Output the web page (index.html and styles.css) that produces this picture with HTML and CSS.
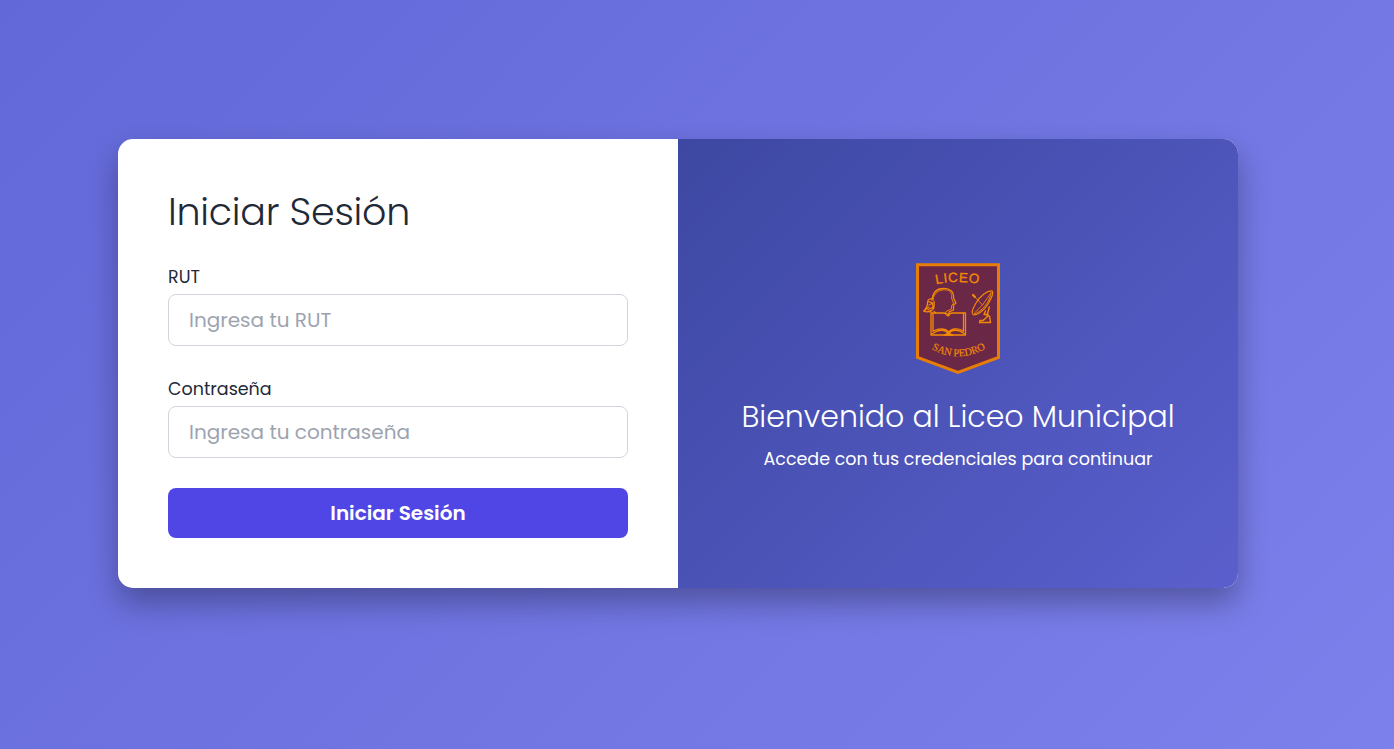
FILE: index.html
```html
<!DOCTYPE html>
<html lang="es">
<head>
<meta charset="utf-8">
<title>Iniciar Sesión</title>
<link rel="stylesheet" href="styles.css">
</head>
<body>
<main class="card">
  <form class="login">
    <h1 class="title">Iniciar Sesión</h1>
    <div class="field">
      <label class="label" for="rut">RUT</label>
      <input class="input" id="rut" type="text" placeholder="Ingresa tu RUT">
    </div>
    <div class="field">
      <label class="label" for="pass">Contraseña</label>
      <input class="input" id="pass" type="password" placeholder="Ingresa tu contraseña">
    </div>
    <button class="submit" type="button">Iniciar Sesión</button>
  </form>
  <section class="welcome">
    <svg class="crest" viewBox="0 0 84 112" width="84" height="112" fill="none" stroke="#f48a04" stroke-linecap="round" stroke-linejoin="round">
      <path d="M1.500 1.800H82.500V94.500L42 109.500L1.500 94.500Z" fill="#6b2846" stroke="#e87d06" stroke-width="3" stroke-linejoin="miter"/>
      <path id="arc-top" d="M20 21.200Q42 16.800 64 21.200" stroke="none"/>
      <path id="arc-bottom" d="M15.500 86Q42 101 70 85.500" stroke="none"/>
      <text class="crest-top"><textPath href="#arc-top" textLength="43" lengthAdjust="spacing">LICEO</textPath></text>
      <text class="crest-bottom"><textPath href="#arc-bottom" textLength="57" lengthAdjust="spacing">SAN PEDRO</textPath></text>
      <path d="M16 37C17 29 21 25.500 27 25.500C34 25 38 29 37.500 35L40 40L37.500 42V47L33 49V52" stroke-width="1.300"/>
      <path d="M17 37C18 29 24 26 31 27C35.500 28 36 32 35.500 35L37.500 40L35.500 43V46L30 48.500Q28 51 31 53Q33 53 34 51" stroke-width=".9"/>
      <path d="M18 48.500L20 50M17 36Q12 35 11.500 39Q12 44 7.500 48Q12 50 16 47Q19 44 18 38M12 39Q17 38 17 44L12 47M13 42L17 40M8 48L13 44M14 49L18 45" stroke-width="1.200"/>
      <path d="M15 50V72H49.500V50M17 51V68M47.500 51V68M15 50H27Q32 50 32.500 53Q33 50 37 50H49.500" stroke-width="1.300"/>
      <path d="M17 68C24 65 29 65 32.500 69C36 65 42 65 47.500 68M16 71C23 66.500 29 66.500 32.500 71C36 66.500 42 66.500 49 71M18 69.500C25 66 29 66 32.500 70C36 66 41 66 47 69.500" stroke-width="1.200"/>
      <path d="M28 72Q32.500 68.500 37 72Z" fill="#f48a04" stroke-width="1"/>
      <path d="M76.300 28C71 27.500 64 33 60 40C57 45 55 50 57 51.500C60 53 68 48 72 41C75 36 77.500 30 76.300 28Z" stroke-width="1.200"/>
      <path d="M75 29.500C74.500 38 66 49 58 51M58 33L66.500 42L75 30M66.500 42L59 49.500" stroke-width=".9"/>
      <path d="M57 32L59 34" stroke-width="2.200"/>
      <path d="M73.300 44L71 53H73.500L74.500 59.500H63.500L64 57.500H67L71 54M69.500 48L68 51.500H72" stroke-width="1.400"/>
    </svg>
    <h2 class="greeting">Bienvenido al Liceo Municipal</h2>
    <p class="hint">Accede con tus credenciales para continuar</p>
  </section>
</main>
</body>
</html>
```
FILE: styles.css
```css
* { box-sizing: border-box; }

body {
  margin: 0;
  min-height: 749px;
  padding: 139px 118px;
  background: linear-gradient(135deg, #6268d8, #7c80eb);
  font-family: Poppins, Inter, "Open Sans", sans-serif;
  color: #1f2937;
}

.card {
  display: flex;
  width: 1120px;
  height: 449px;
  overflow: hidden;
  border-radius: 15px;
  background: #fff;
  box-shadow: 0 15px 30px rgba(0, 0, 0, .3);
}

.login {
  display: flex;
  flex-direction: column;
  width: 560px;
  padding: 50px;
}

.title {
  margin: 0 0 30px;
  height: 46px;
  font-size: 38px;
  font-weight: 300;
  line-height: 46px;
  letter-spacing: -.22px;
}

.field { margin-bottom: 30px; }

.label {
  display: block;
  height: 29px;
  font-size: 17.500px;
  line-height: 24px;
}

.field + .field .label { height: 30px; line-height: 26px; }

.input {
  display: block;
  width: 100%;
  height: 52px;
  padding: 0 20px;
  border: 1px solid #d1d5db;
  border-radius: 8px;
  background: #fff;
  font: 400 20px Poppins, Inter, sans-serif;
}

.input::placeholder { color: #9ca3af; }

.submit {
  height: 50px;
  border: 0;
  border-radius: 8px;
  background: #4f46e5;
  color: #fff;
  font: 600 20px Poppins, Inter, sans-serif;
}

.welcome {
  display: flex;
  flex-direction: column;
  align-items: center;
  width: 560px;
  padding-top: 124px;
  background: linear-gradient(135deg, #3d48a2, #5a5fcd);
  color: #fff;
}

.crest { display: block; }

.crest-top {
  font: 13.500px "Liberation Sans", sans-serif;
  fill: #f48a04;
  stroke: #f48a04;
  stroke-width: .3px;
}

.crest-bottom {
  font: 10.500px "Liberation Serif", serif;
  fill: #f48a04;
  stroke: #f48a04;
  stroke-width: .15px;
}

.greeting {
  margin: 23px 0 0;
  font-size: 30px;
  font-weight: 300;
  line-height: 38px;
  white-space: nowrap;
}

.hint {
  margin: 10px 0 0;
  font-size: 17.500px;
  font-weight: 400;
  line-height: 26px;
  white-space: nowrap;
}
```
